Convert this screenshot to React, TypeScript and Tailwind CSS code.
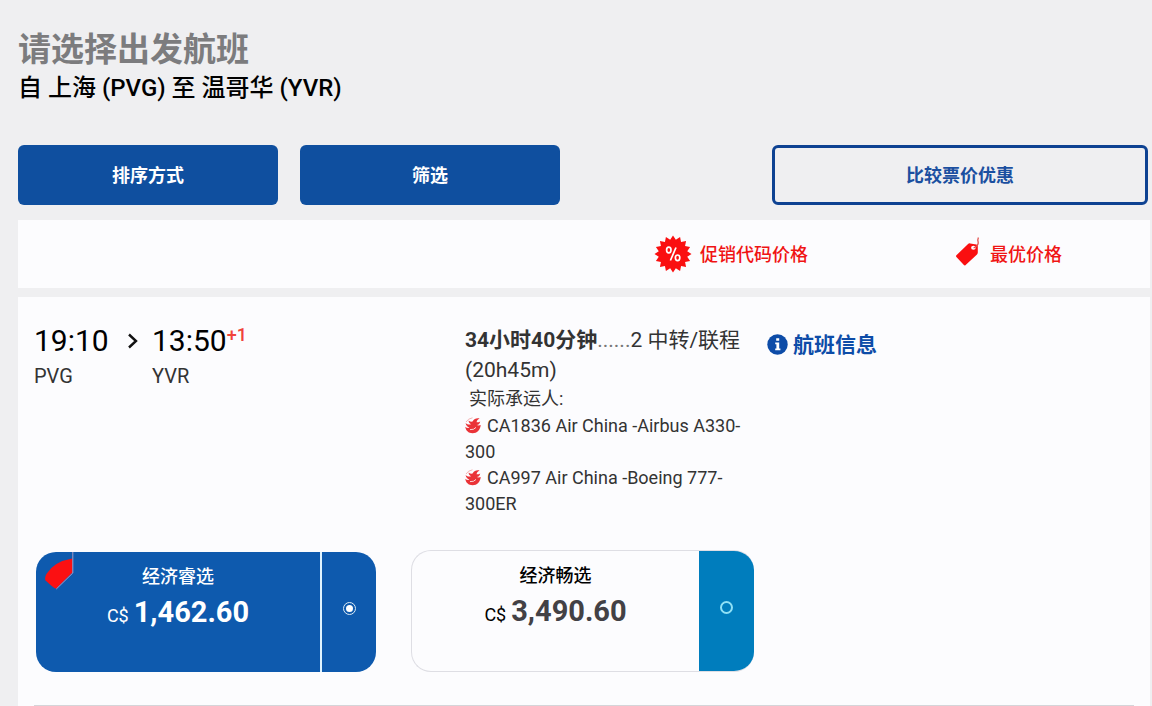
import React, { useState } from 'react';

interface Fare {
  id: string;
  name: string;
  price: string;
  lowest: boolean;
}

interface Leg {
  id: string;
  text: string;
}

const fares: Fare[] = [
  { id: 'smart', name: '经济睿选', price: '1,462.60', lowest: true },
  { id: 'flex', name: '经济畅选', price: '3,490.60', lowest: false },
];

const legs: Leg[] = [
  { id: 'CA1836', text: 'CA1836 Air China -Airbus A330-300' },
  { id: 'CA997', text: 'CA997 Air China -Boeing 777-300ER' },
];

const App: React.FC = () => {
  const [selected, setSelected] = useState('smart');

  return (
    <div className="min-h-screen bg-[#efeff1] pl-[18px] pr-[2px] pt-[30px] text-black font-['Roboto','Noto_Sans_CJK_SC',sans-serif]">
      <header>
        <h1 className="text-[33px] leading-[40px] font-bold text-[#7c7c7e]">请选择出发航班</h1>
        <p className="text-[24px] leading-[36px] font-medium">自 上海 (PVG) 至 温哥华 (YVR)</p>
      </header>

      {/* Toolbar */}
      <div className="mt-[39px] mr-[2px] flex gap-[22px] text-[18px] font-bold">
        <button className="h-[60px] w-[260px] rounded-[6px] bg-[#0f4f9f] text-white">排序方式</button>
        <button className="h-[60px] w-[260px] rounded-[6px] bg-[#0f4f9f] text-white">筛选</button>
        <button className="ml-auto h-[60px] w-[376px] rounded-[6px] border-3 border-[#0e4292] text-[#1b4fa0]">
          比较票价优惠
        </button>
      </div>

      {/* Legend */}
      <div className="mt-[15px] flex h-[68px] items-center justify-end bg-[#fcfcfe] pr-[88px] text-[18px] font-medium text-[#f01414]">
        <div className="mr-[148px] flex items-center gap-2">
          <PromoBadge />
          <span>促销代码价格</span>
        </div>
        <div className="flex items-center gap-2">
          <PriceTag />
          <span>最优价格</span>
        </div>
      </div>

      {/* Flight */}
      <section className="mt-[9px] bg-[#fcfcfe] px-4 pt-[26px]">
        <div className="flex min-h-[227px]">
          <div className="flex w-[431px] shrink-0">
            <div className="w-[118px]">
              <div className="flex items-center text-[30px] leading-[36px]">
                19:10
                <Chevron />
              </div>
              <div className="text-[20px] leading-[34px] text-[#333]">PVG</div>
            </div>
            <div>
              <div className="flex text-[30px] leading-[36px]">
                13:50
                <sup className="top-0 text-[18px] leading-[24px] font-medium text-[#f0433a]">+1</sup>
              </div>
              <div className="text-[20px] leading-[34px] text-[#333]">YVR</div>
            </div>
          </div>

          <div className="w-[302px] shrink-0 pt-[2px] pr-4 text-[#333]">
            <div className="flex text-[21px] leading-[30px] whitespace-nowrap">
              <span className="font-bold">34小时40分钟</span>
              <span className="text-[#777]">......</span>
              <span>2 中转/联程</span>
            </div>
            <p className="text-[21px] leading-[30px]">(20h45m)</p>
            <p className="pl-1 text-[18px] leading-[28px]">实际承运人:</p>
            <ul className="text-[18px] leading-[26px]">
              {legs.map((leg) => (
                <li key={leg.id}>
                  <Phoenix />
                  {leg.text}
                </li>
              ))}
            </ul>
          </div>

          <a href="#info" className="mt-[8px] flex h-[30px] items-center gap-[5px] text-[21px] font-bold text-[#0d4ca8]">
            <InfoIcon />
            航班信息
          </a>
        </div>

        <div className="flex items-end gap-[35px] pb-[33px] pl-[2px]">
          {fares.map((fare) => (
            <FareCard
              key={fare.id}
              fare={fare}
              checked={selected === fare.id}
              onSelect={() => setSelected(fare.id)}
            />
          ))}
        </div>
        <hr className="border-[#d5d5d9]" />
      </section>
    </div>
  );
};

const FareCard = ({ fare, checked, onSelect }: { fare: Fare; checked: boolean; onSelect: () => void }) => (
  <label
    className={`relative flex cursor-pointer overflow-hidden rounded-[20px] ${
      checked ? 'h-[120px] w-[340px] bg-[#0e5aae] text-white' : 'h-[122px] w-[343px] border border-r-0 border-[#dedee4] text-black'
    }`}
  >
    {fare.lowest && <CornerTag />}
    <span className="flex flex-1 flex-col items-center pt-[12px]">
      <span className="text-[18px] leading-[26px] font-medium">{fare.name}</span>
      <span className="flex items-baseline gap-[5px] leading-[44px]">
        <span className="text-[18px]">C$</span>
        <span className={`text-[29px] font-bold ${checked ? 'text-white' : 'text-[#434145]'}`}>{fare.price}</span>
      </span>
    </span>
    <span
      className={`flex items-center justify-center ${
        checked ? 'w-[56px] border-l-2 border-[#dff3ff]' : 'w-[55px] bg-[#007dbd]'
      }`}
    >
      <input
        type="radio"
        name="fare"
        checked={checked}
        onChange={onSelect}
        aria-label={fare.name}
        className={`mt-[-8px] size-[13px] appearance-none rounded-full ${
          checked
            ? 'border border-[#dcebf5] bg-white bg-clip-content p-[2px]'
            : 'border-2 border-[#8fe0f5]'
        }`}
      />
    </span>
  </label>
);

// 16-pointed burst with a percent sign
const burst = Array.from({ length: 32 }, (_, i) => {
  const r = i % 2 === 0 ? 18.5 : 14.5;
  const a = (i * Math.PI) / 16 - Math.PI / 2;
  return `${(19 + r * Math.cos(a)).toFixed(2)},${(19 + r * Math.sin(a)).toFixed(2)}`;
}).join(' ');

const PromoBadge = () => (
  <svg width="38" height="38" viewBox="0 0 38 38" aria-hidden="true">
    <polygon points={burst} fill="#fa0f10" />
    <g fill="none" stroke="#fff" strokeWidth="1.7">
      <ellipse cx="14.8" cy="15" rx="2.2" ry="2.8" />
      <ellipse cx="23.6" cy="22.8" rx="2.2" ry="2.8" />
      <path d="M22 12.5 16.4 25.5" />
    </g>
  </svg>
);

const PriceTag = () => (
  <svg className="mb-[3px]" width="26" height="32" viewBox="0 0 26 32" aria-hidden="true">
    <path
      fill="#fa0f10"
      fillRule="evenodd"
      d="M.4 18.2 11.8 7.2Q12.8 6.2 14.2 6.4L20.4 7.4Q21.8 7.8 21.8 9.2V15.6Q21.8 16.6 21 17.4L9.4 28.2Q8.6 28.8 7.9 28L.4 20Q-.4 19 .4 18.2ZM17.4 8.8A2.3 2 0 1 0 17.4 12.8 2.3 2 0 1 0 17.4 8.8Z"
    />
    <path fill="none" stroke="#e2504c" strokeWidth="1.3" d="M17.6 11Q22.6 8.6 22.2 5.4 21.4 2.6 22.4 .5" />
  </svg>
);

const CornerTag = () => (
  <svg className="absolute top-0 left-[8px]" width="30" height="38" viewBox="0 0 30 38" aria-hidden="true">
    <path fill="#fb1012" d="M2.4 22Q10 9.5 28.3 6.5V20.5L12 36.8Q9.5 36 1.6 28.5 .2 26.5 2.4 22Z" />
    <path fill="none" stroke="#a99ac4" strokeWidth="1" d="M28.8 0V21L12.3 37" />
  </svg>
);

const Phoenix = () => (
  <svg className="mr-[6px] inline-block align-[-2px]" width="16" height="17" viewBox="0 0 16 17" aria-hidden="true">
    <path
      fill="#ea3338"
      d="M7.6 4.6C9 2 11.8.8 14.6 1.6 12.8 2.4 11.8 3.6 11.6 5.2 12.8 5.4 14 5.2 15.2 4.4 15 6.4 13.6 7.6 11.6 8 13 8.6 14.4 8.6 15.7 8 15.4 12.8 12 16.2 7.6 16.3 3.4 16.3.6 13.4.3 9.8 1.6 11 3 11.4 4.4 10.8 2.6 10 1 8.6.6 6 2.4 7.6 4.4 8 6 7.2 4.6 6.4 3.6 5.2 3.6 3.4 4.8 4.6 6.2 5 7.6 4.6Z"
    />
    <path fill="none" stroke="#fff" strokeWidth=".8" d="M5 12.6Q9 13 11 10.4" />
    <path fill="none" stroke="#f3a3a5" strokeWidth=".8" d="M1 5Q3 1.5 7.5 .8" />
  </svg>
);

const InfoIcon = () => (
  <svg className="mb-[3px]" width="21" height="21" viewBox="0 0 21 21" aria-hidden="true">
    <circle cx="10.5" cy="10.5" r="10.2" fill="#0d4ca8" />
    <path fill="#fff" d="M9.2 4.2h3v2.6h-3zM8.2 8.4h4v6h1.2v1.8H8.2v-1.8h1.2v-4.2H8.2z" />
  </svg>
);

const Chevron = () => (
  <svg className="ml-[18px]" width="12" height="16" viewBox="0 0 12 16" aria-hidden="true">
    <path fill="none" stroke="#111" strokeWidth="2.4" d="M2 1.5 9 8 2 14.5" />
  </svg>
);

export default App;
